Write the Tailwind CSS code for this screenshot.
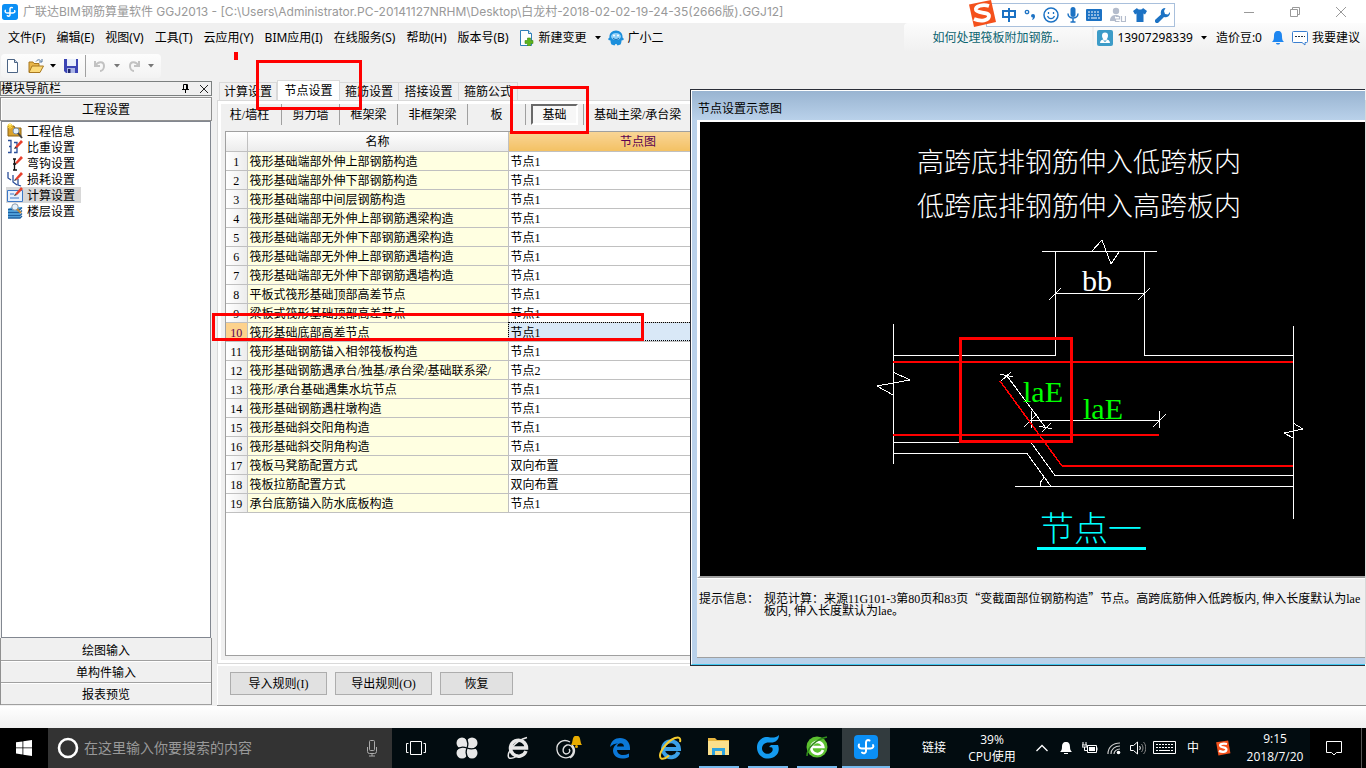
<!DOCTYPE html>
<html lang="zh-CN">
<head>
<meta charset="utf-8">
<title>广联达BIM钢筋算量软件 GGJ2013</title>
<script src="https://cdn.jsdelivr.net/npm/@tailwindcss/browser@4"></script>
</head>
<body class="relative flex h-screen flex-col overflow-hidden bg-[#f0f0f0] font-['Liberation_Serif','Noto_Sans_CJK_SC',sans-serif] text-xs text-black">

<!-- Title bar -->
<header class="flex h-[23px] shrink-0 items-center bg-white pl-[2px] font-['Inter','Noto_Sans_CJK_SC',sans-serif] text-[#999]">
  <svg class="mr-[5px] size-4 shrink-0" viewBox="0 0 24 24"><rect width="24" height="24" rx="4" fill="#0b8ff5"/><path d="M15.500 5.500c-2-1-3.500 0-3.500 2v8.500c0 2-2 3-4 1.500M5 9.500c-1 2 .5 4 2.500 4h9c2.500 0 3.500-2 2.500-3.500" fill="none" stroke="#fff" stroke-width="2.200" stroke-linecap="round"/></svg>
  <h1 class="grow whitespace-nowrap">广联达BIM钢筋算量软件 GGJ2013 - [C:\Users\Administrator.PC-20141127NRHM\Desktop\白龙村-2018-02-02-19-24-35(2666版).GGJ12]</h1>
  <div class="flex items-center pr-[19px]">
    <button aria-label="最小化" class="w-[46px]"><svg class="mr-auto size-3" viewBox="0 0 12 12"><path d="M1 6.500h10" stroke="#999"/></svg></button>
    <button aria-label="还原" class="w-[46px]"><svg class="size-3" viewBox="0 0 12 12"><path d="M1.500 3.500h7v7h-7zM3.500 3V1.500h7v7H9" fill="none" stroke="#999"/></svg></button>
    <button aria-label="关闭"><svg class="size-3" viewBox="0 0 12 12"><path d="M1 1l10 10M11 1L1 11" stroke="#999"/></svg></button>
  </div>
</header>

<!-- Menu bar -->
<nav class="flex h-[29px] shrink-0 items-center justify-between font-['Noto_Sans','Noto_Sans_CJK_SC',sans-serif]">
  <div class="flex items-center gap-[11px] pl-2 whitespace-nowrap">
    <button>文件(F)</button><button>编辑(E)</button><button>视图(V)</button><button>工具(T)</button><button>云应用(Y)</button><button>BIM应用(I)</button><button>在线服务(S)</button><button>帮助(H)</button><button>版本号(B)</button>
    <button class="-ml-px flex items-center gap-1">
      <svg class="size-4" viewBox="0 0 16 16"><path d="M1.500.5h8l3 3v12h-11z" fill="#fff" stroke="#2f7fb8"/><path d="M9.500.5v3h3" fill="#dceefa" stroke="#2f7fb8"/><path d="M8.500 8h3v2.500H14v3h-2.500V16h-3v-2.500H6v-3h2.500z" fill="#5db51c" stroke="#3c8a12" stroke-width=".6"/></svg>
      新建变更
      <svg class="ml-1 h-1 w-[6px]" viewBox="0 0 6 4"><path d="M0 0h6L3 3.500z"/></svg>
    </button>
    <button class="-ml-1 flex items-center gap-1">
      <svg class="size-4" viewBox="0 0 16 16"><path d="M8 .5c4 0 7 3 6.500 7 1 .5 1.500 1.500 1 2.500l-2 .5c0 2-.5 3-1 4l-3 1-1-1.500h-1l-1 1.500-3-1c-.5-1-1-2-1-4L.5 10c-.5-1 0-2 1-2.500C1 3.500 4 .5 8 .5z" fill="#1c8fdc"/><ellipse cx="8" cy="6.500" rx="5" ry="3.500" fill="#8fd0f8"/><circle cx="6" cy="5.500" r="1" fill="#fff"/><circle cx="10" cy="5.500" r="1" fill="#fff"/><path d="M5 8c2 2 4 2 6 0" stroke="#0c62a8" fill="none"/></svg>
      广小二
    </button>
  </div>
  <div class="flex h-full items-center gap-[2px] whitespace-nowrap">
    <a href="#" class="flex h-full w-[188px] items-center rounded-t bg-linear-to-b from-[#fcfcfc] to-[#f0f0f0] pl-7 text-[#0c6470]">如何处理筏板附加钢筋..</a>
    <div class="flex h-full items-center bg-linear-to-b from-[#fcfcfc] to-[#f0f0f0] pr-[6px] pl-[3px]">
      <button class="flex items-center gap-1">
        <svg class="size-4" viewBox="0 0 16 16"><rect width="16" height="16" rx="2" fill="#3d9cc8"/><path d="M8 2.500c2 0 3 1.300 3 3 0 2-1 3.500-1.500 4 1.500 0 3.500 1 3.500 3.500H3C3 10.500 5 9.500 6.500 9.500 6 9 5 7.500 5 5.500c0-1.700 1-3 3-3z" fill="#fff"/><path d="M6 10.500h4l-2 1.500z" fill="#3d9cc8"/></svg>
        13907298339
        <svg class="ml-1 h-1 w-[6px]" viewBox="0 0 6 4"><path d="M0 0h6L3 3.500z"/></svg>
      </button>
      <span class="ml-[9px]">造价豆:0</span>
      <button aria-label="通知" class="ml-[10px]"><svg class="h-4 w-3" viewBox="0 0 12 16"><path d="M6 1c3 0 4 2 4 5 0 4 1 5 2 6H0c1-1 2-2 2-6 0-3 1-5 4-5zM4 13h4c0 2-4 2-4 0z" fill="#1e86f0"/></svg></button>
      <button class="ml-2 flex items-center gap-1">
        <svg class="size-4" viewBox="0 0 16 16"><path d="M1.500 1.500h13a1 1 0 0 1 1 1v9a1 1 0 0 1-1 1H13v2.500L10 12.500H1.500a1 1 0 0 1-1-1v-9a1 1 0 0 1 1-1z" fill="#fff" stroke="#3a7fd0"/><path d="M3 6.500h10" stroke="#234" stroke-dasharray="2 1"/></svg>
        我要建议
      </button>
    </div>
  </div>
</nav>

<!-- Tool bar -->
<div class="flex h-[29px] shrink-0 items-start pt-[2px] pl-px">
  <div class="flex h-6 w-[160px] items-center rounded bg-linear-to-b from-[#fdfdfd] to-[#f3f3f3] pl-[5px]">
    <button aria-label="新建"><svg class="h-4 w-[14px]" viewBox="0 0 14 16"><path d="M1.500 1.500h7l3 3v10h-10z" fill="#fff" stroke="#4c6484"/><path d="M8.500 1.500v3h3" fill="#cfdceb" stroke="#4c6484"/></svg></button>
    <button aria-label="打开" class="ml-2 flex items-center gap-[6px]"><svg class="size-4" viewBox="0 0 16 16"><path d="M1 14V4h4l1 1.500h5V8" fill="#e8b64a" stroke="#a87820"/><path d="M1 14.500L4 8h11.500L12 14.500z" fill="#fbd978" stroke="#a87820"/><path d="M8 3.500c2-2.500 4-2 5 0M14 1v3h-3" fill="none" stroke="#50759f"/></svg><svg class="h-1 w-[6px]" viewBox="0 0 6 4"><path d="M0 0h6L3 3.500z"/></svg></button>
    <button aria-label="保存" class="ml-[7px]"><svg class="size-4" viewBox="0 0 16 16"><path d="M1 1h14v14H3l-2-2z" fill="#3b44b4"/><path d="M4 1h9v7H4z" fill="#e8eefb"/><path d="M4 10h8v5H4z" fill="#aab4e6"/><path d="M5 11h2.500v4H5z" fill="#20286c"/></svg></button>
    <span class="mx-[6px] h-[22px] w-px bg-[#a0a0a0]"></span>
    <button aria-label="撤销" class="flex items-center gap-[6px]"><svg class="size-4" viewBox="0 0 16 16"><path d="M3 3v5h5M3.500 7.500C6 3 12 3 12 8c0 3-2 5-4 5" fill="none" stroke="#c2c2c2" stroke-width="2"/></svg><svg class="h-1 w-[6px]" viewBox="0 0 6 4"><path d="M0 0h6L3 3.500z" fill="#777"/></svg></button>
    <button aria-label="重做" class="ml-[6px] flex items-center gap-[6px]"><svg class="size-4" viewBox="0 0 16 16"><path d="M13 3v5H8M12.500 7.500C10 3 4 3 4 8c0 3 2 5 4 5" fill="none" stroke="#c2c2c2" stroke-width="2"/></svg><svg class="h-1 w-[6px]" viewBox="0 0 6 4"><path d="M0 0h6L3 3.500z" fill="#777"/></svg></button>
  </div>
</div>

<main class="flex min-h-0 grow">
  <!-- Module navigation -->
  <aside class="flex w-[212px] shrink-0 flex-col">
    <div class="flex h-[15px] shrink-0 items-center justify-between border border-[#7c8080] pr-[2px] leading-3">
      <span>模块导航栏</span>
      <span class="flex items-center gap-[9px]">
        <button aria-label="固定"><svg class="h-[9px] w-[9px]" viewBox="0 0 9 9"><path d="M2.500 5V.5h4V5M1 5.500h7M4.500 5.500V9M5.500 1v4" fill="none" stroke="#000"/></svg></button>
        <button aria-label="关闭导航栏"><svg class="size-[10px]" viewBox="0 0 10 10"><path d="M1 1l8 8M9 1L1 9" stroke="#222"/></svg></button>
      </span>
    </div>
    <button class="mt-px h-6 shrink-0 border border-[#909090] pt-[2px] shadow-[inset_1px_1px_#fff]">工程设置</button>
    <ul class="mx-px grow border border-[#828790] bg-white pt-px pl-1 leading-4">
      <li class="flex h-4 w-[75px] items-center gap-1 whitespace-nowrap"><svg class="ml-px size-4 shrink-0" viewBox="0 0 16 16"><path d="M1 3h6l1 2h6v8H1z" fill="#d9a12c" stroke="#8b6212"/><path d="M3 0v6M0 3h6M1 1l4 4M5 1L1 5" stroke="#ffd83a"/><circle cx="9" cy="8" r="3" fill="#e4f1fb" stroke="#7a8fa8"/><path d="M11 10l4 5" stroke="#444" stroke-width="2"/></svg><span class="pt-px">工程信息</span></li>
      <li class="flex h-4 w-[75px] items-center gap-1 whitespace-nowrap"><svg class="ml-px size-4 shrink-0" viewBox="0 0 16 16"><path d="M1 1.500h3v12H1M7 3.500h3v10H7M4 7.500H2M10 8.500H8" fill="none" stroke="#2b4f9a" stroke-width="1.300"/><path d="M8 8l6-7 2 2-6 6z" fill="#e8402c"/><path d="M7 10l1-2 2 1z" fill="#222"/></svg><span class="pt-px">比重设置</span></li>
      <li class="flex h-4 w-[75px] items-center gap-1 whitespace-nowrap"><svg class="ml-px size-4 shrink-0" viewBox="0 0 16 16"><path d="M6 4h3M7.500 4v11M6 9h3M6 15h4" fill="none" stroke="#111" stroke-width="1.300"/><path d="M8 8l6-7 2 2-6 6z" fill="#e8402c"/><path d="M7 10l1-2 2 1z" fill="#222"/></svg><span class="pt-px">弯钩设置</span></li>
      <li class="flex h-4 w-[75px] items-center gap-1 whitespace-nowrap"><svg class="ml-px size-4 shrink-0" viewBox="0 0 16 16"><path d="M1 1v6l3 2M6 4v7l4 3M11 8v6l3 1" fill="none" stroke="#2b4f9a" stroke-width="1.300"/><path d="M8 8l6-7 2 2-6 6z" fill="#e8402c"/><path d="M7 10l1-2 2 1z" fill="#222"/></svg><span class="pt-px">损耗设置</span></li>
      <li class="flex h-4 w-[75px] items-center gap-1 bg-[#d8d8d8] whitespace-nowrap"><svg class="ml-px size-4 shrink-0" viewBox="0 0 16 16"><path d="M.5 3.500h15v11H.5z" fill="#e6f0fc" stroke="#3c78c8"/><path d="M3 7h4M3 11h9" stroke="#3c78c8"/><path d="M8 7l6-7 2 2-6 6z" fill="#e8402c"/><path d="M7 9l1-2 2 1z" fill="#222"/></svg><span class="pt-px">计算设置</span></li>
      <li class="flex h-4 w-[75px] items-center gap-1 whitespace-nowrap"><svg class="ml-px size-4 shrink-0" viewBox="0 0 16 16"><path d="M1 6l4-2h10l-2 2v9H1z" fill="#5cb0e8"/><path d="M1 6.500h12l2-2M1 9.500h12l2-2M1 12.500h12l2-2M1 15h12l2-2" fill="none" stroke="#1d5fa0" stroke-width="1.300"/><circle cx="8" cy="4" r="3.200" fill="#e4f1fb" stroke="#8a98a8"/><path d="M10 6l4 4" stroke="#c08a3c" stroke-width="2"/></svg><span class="pt-px">楼层设置</span></li>
    </ul>
    <div class="flex shrink-0 flex-col border-x border-[#909090] pt-px">
      <button class="h-[22px] border-b border-[#a0a0a0] pt-[2px]">绘图输入</button>
      <button class="h-[22px] border-b border-[#a0a0a0] pt-[2px] shadow-[inset_0_1px_#fff]">单构件输入</button>
      <button class="h-[22px] border-b border-[#a0a0a0] pt-[2px] shadow-[inset_0_1px_#fff]">报表预览</button>
    </div>
    <div class="h-px"></div>
  </aside>

  <!-- Settings -->
  <section class="ml-[5px] flex min-w-0 grow flex-col border-b border-[#909090]">
    <div class="flex h-[19px] shrink-0 items-end pl-[2px] whitespace-nowrap" role="tablist">
      <button role="tab" class="h-[18px] w-[58px] border border-b-0 border-[#d9d9d9]">计算设置</button>
      <button role="tab" aria-selected="true" class="-mb-px h-[21px] w-[63px] border border-b-0 border-[#d9d9d9] bg-white">节点设置</button>
      <button role="tab" class="h-[18px] w-[59px] border border-b-0 border-l-0 border-[#d9d9d9]">箍筋设置</button>
      <button role="tab" class="h-[18px] w-[60px] border border-b-0 border-l-0 border-[#d9d9d9]">搭接设置</button>
      <button role="tab" class="h-[18px] w-[59px] border border-b-0 border-l-0 border-[#d9d9d9]">箍筋公式</button>
    </div>
    <div class="flex min-h-0 grow flex-col border border-[#d9d9d9] bg-white p-[3px]">
      <div class="flex min-h-0 grow flex-col bg-[#f0f0f0] pb-1 pl-1">
        <div class="flex h-[27px] shrink-0 items-start whitespace-nowrap">
          <button class="mr-[10px] ml-[3px] h-[21px] w-[43px] text-center">柱/墙柱</button>
          <span class="h-[21px] w-px bg-[#a0a0a0]"></span>
          <button class="h-[21px] w-[57px]">剪力墙</button>
          <span class="h-[21px] w-px bg-[#a0a0a0]"></span>
          <button class="h-[21px] w-[57px]">框架梁</button>
          <span class="h-[21px] w-px bg-[#a0a0a0]"></span>
          <button class="h-[21px] w-[69px]">非框架梁</button>
          <span class="h-[21px] w-px bg-[#a0a0a0]"></span>
          <button class="h-[21px] w-[57px]">板</button>
          <span class="h-[21px] w-px bg-[#a0a0a0]"></span>
          <button aria-pressed="true" class="mx-[5px] h-[21px] w-[47px] border-2 border-t-[#696969] border-r-white border-b-white border-l-[#696969] bg-[#f7f7f7]">基础</button>
          <span class="h-[21px] w-px bg-[#a0a0a0]"></span>
          <button class="ml-[10px] h-[21px]">基础主梁/承台梁</button>
        </div>
        <div class="min-h-0 grow border border-[#a0a0a0] bg-white">
          <table class="w-[542px] table-fixed border-collapse leading-3">
            <colgroup><col class="w-[21px]"><col class="w-[261px]"><col class="w-[260px]"></colgroup>
            <thead>
              <tr class="h-[19px] bg-linear-to-b from-white to-[#ececec]">
                <th class="border-r border-b border-[#c0c0c0]"></th>
                <th class="border-r border-b border-[#c0c0c0] p-0 pt-[2px] font-normal">名称</th>
                <th class="border-r border-b border-[#c0c0c0] bg-linear-to-b from-[#f9d595] to-[#f3c163] p-0 pt-[2px] font-normal text-[#5a0050]">节点图</th>
              </tr>
            </thead>
            <tbody id="rows"></tbody>
          </table>
        </div>
      </div>
    </div>
    <div class="flex h-[41px] shrink-0 items-start gap-2 border-t-2 border-l border-white pt-[6px] pl-3">
      <button class="h-[23px] w-[97px] border border-[#adadad] bg-[#e1e1e1]">导入规则(I)</button>
      <button class="h-[23px] w-[97px] border border-[#adadad] bg-[#e1e1e1]">导出规则(O)</button>
      <button class="h-[23px] w-[73px] border border-[#adadad] bg-[#e1e1e1]">恢复</button>
    </div>
  </section>
</main>

<div class="h-[22px] shrink-0 bg-linear-to-b from-white to-[#f0f0f0]"></div>

<!-- Taskbar -->
<footer class="flex h-10 shrink-0 bg-[#020c10] font-['Open_Sans','Noto_Sans_CJK_SC',sans-serif] text-white">
  <button aria-label="开始" class="flex w-12 items-center justify-center bg-black"><svg class="size-4" viewBox="0 0 16 16"><path d="M0 2.300L6.500 1.400V7.500H0zM7.300 1.300L16 0v7.500H7.300zM0 8.300h6.500v6.200L0 13.600zM7.300 8.300H16V16l-8.700-1.300z" fill="#fff"/></svg></button>
  <label class="flex w-[344px] items-center bg-[#333] pl-[9px]">
    <svg class="mr-[5px] size-[22px]" viewBox="0 0 22 22"><circle cx="11" cy="11" r="9" fill="none" stroke="#fff" stroke-width="2.600"/></svg>
    <input aria-label="搜索" placeholder="在这里输入你要搜索的内容" class="min-w-0 grow bg-transparent text-sm placeholder:text-[#999]">
    <svg class="mr-[13px] h-[18px] w-[14px]" viewBox="0 0 14 18"><rect x="4.500" y="1.500" width="5" height="10" rx="1" fill="none" stroke="#aaa"/><path d="M2.500 8v4.500a2 2 0 0 0 2 2h5a2 2 0 0 0 2-2V8M7 14.500V17M4 17h6" fill="none" stroke="#aaa"/></svg>
  </label>
  <div class="flex gap-[3px]">
    <button aria-label="任务视图" class="flex w-12 items-center justify-center"><svg class="h-4 w-5" viewBox="0 0 20 16"><path d="M4.500 1.500h11v13h-11zM2.500 3.500H.5v9h2M17.500 3.500h2v9h-2" fill="none" stroke="#fff"/></svg></button>
    <button aria-label="风车" class="flex w-12 items-center justify-center"><svg class="size-[22px]" viewBox="0 0 22 22"><g fill="#e8e8e8"><circle cx="6" cy="6" r="5.500"/><circle cx="16" cy="6" r="5.500"/><circle cx="6" cy="16" r="5.500"/><circle cx="16" cy="16" r="5.500"/><rect x="4" y="4" width="14" height="14"/></g><g fill="none" stroke="#020c10" stroke-width="1.300"><path d="M11 11C12.500 7 12 3 9 0"/><path d="M11 11C15 12.500 19 12 22 9"/><path d="M11 11C9.500 15 10 19 13 22"/><path d="M11 11C7 9.500 3 10 0 13"/></g></svg></button>
    <button aria-label="浏览器" class="flex w-12 items-center justify-center"><svg class="size-6" viewBox="0 0 24 24"><path d="M20 15a8 8 0 1 1 .5-3H6" fill="none" stroke="#e8e8e8" stroke-width="3.500"/><path d="M3 22C0 18 8 5 21 1.500M3 22c3 1 7-1 9-3" fill="none" stroke="#e8e8e8" stroke-width="1.500"/></svg></button>
    <button aria-label="广联云" class="flex w-12 items-center justify-center"><svg class="h-6 w-7" viewBox="0 0 28 24"><path d="M15 6C8 2 1 7 2 14s9 10 14 6c5-5 1-12-4-11-5 2-5 8-1 9 3 0 5-3 3-5M17 9c4 4 3 10-2 13" fill="none" stroke="#e0e0e0" stroke-width="1.400"/><path d="M16 9c2-2 1-8 4-9h3c3 1 2 7 4 9z" fill="#e8ac00"/><circle cx="21.500" cy="10.500" r="1.500" fill="#e8ac00"/></svg></button>
    <button aria-label="Edge" class="flex w-12 items-center justify-center"><svg class="size-[22px]" viewBox="0 0 22 22"><path d="M1 10C2 4 6 1 11 1c6 0 10 4 10 10v2H8c0 3 3 5 6 5 2 0 4-.5 6-1.500V20c-2 1-4 1.500-7 1.500-6 0-9-4-9-8 0-3 2-6 5-7-3 0-6 1-8 3.500zM8 9.500h7C15 5 8.500 5 8 9.500z" fill="#0b78d8"/></svg></button>
  </div>
  <div class="ml-[2px] flex gap-px">
    <button aria-label="Internet Explorer" class="flex w-12 items-center justify-center"><svg class="size-6" viewBox="0 0 24 24"><path d="M20.500 16a8 8 0 1 1 .5-3H7" fill="none" stroke="#3ba0e8" stroke-width="4"/><path d="M3 22.500C-1 18 9 5 17 2c4-1.500 6 0 5 4M3 22.500c3 1 6-1 8-3" fill="none" stroke="#f5cb2e" stroke-width="2"/></svg></button>
    <button aria-label="文件资源管理器" class="flex w-12 items-center justify-center"><span class="flex h-full w-10 items-center justify-center border-b-2 border-[#76b9ed]"><svg class="h-5 w-[22px]" viewBox="0 0 22 20"><path d="M0 1h7l2 2h12v15H0z" fill="#e8b640"/><path d="M0 4h21v14H0z" fill="#fbe08c"/><path d="M4 18v-7h13v7h-3v-4H7v4z" fill="#2ea3de"/></svg></span></button>
    <button aria-label="广联达" class="flex w-12 items-center justify-center"><span class="flex h-full w-10 items-center justify-center border-b-2 border-[#76b9ed]"><svg class="size-6" viewBox="0 0 24 24"><path d="M23 0c0 5-4 8-9 7.500-5-.5-8 2-8 6 0 4 4 6 7.500 5 3-1 4-4 2.500-6l-3-.500 2-2h7c3 8-3 13.500-9.500 13.500C6 24 1 19 1 12.500 1 6 6 1.500 12 2c4 1 8 1 11-2z" fill="#149bf0"/></svg></span></button>
    <button aria-label="360浏览器" class="flex w-12 items-center justify-center"><span class="flex h-full w-10 items-center justify-center border-b-2 border-[#76b9ed]"><svg class="size-6" viewBox="0 0 24 24"><circle cx="12" cy="12" r="10.500" fill="#5cc030"/><path d="M18 15a6 6 0 1 1 .3-3H7" fill="none" stroke="#fff" stroke-width="2.600"/><path d="M2 21C2 12 12 4 22 2" fill="none" stroke="#2f8a1c" stroke-width="1.500"/></svg></span></button>
    <button aria-label="GGJ2013" class="flex w-12 items-center justify-center border-b-2 border-[#76b9ed] bg-[#323b3e]"><svg class="size-6" viewBox="0 0 24 24"><rect width="24" height="24" rx="4" fill="#0b8ff5"/><path d="M15.500 5.500c-2-1-3.500 0-3.500 2v8.500c0 2-2 3-4 1.500M5 9.500c-1 2 .5 4 2.500 4h9c2.500 0 3.500-2 2.500-3.500" fill="none" stroke="#fff" stroke-width="2" stroke-linecap="round"/></svg></button>
  </div>
  <div class="ml-auto flex items-center whitespace-nowrap">
    <span class="w-10 text-center">链接</span>
    <span class="w-[76px] text-center leading-[17px]">39%<br>CPU使用</span>
    <button aria-label="显示隐藏的图标" class="flex w-6 justify-center"><svg class="h-2 w-3" viewBox="0 0 12 8"><path d="M.5 7L6 1.500 11.500 7" fill="none" stroke="#fff" stroke-width="1.300"/></svg></button>
    <button aria-label="提醒" class="flex w-6 justify-center"><svg class="size-[14px]" viewBox="0 0 14 14"><path d="M7 1c3 0 4 2 4 5 0 3 1 4 2 5H1c1-1 2-2 2-5 0-3 1-5 4-5zM5 12h4v1H5z" fill="#fff"/></svg></button>
    <button aria-label="电源" class="flex w-6 justify-center"><svg class="h-3 w-4" viewBox="0 0 16 12"><path d="M5.500 3.500h9v7h-9zM15 5.500v3" fill="none" stroke="#fff"/><path d="M7 5h6v4H7z" fill="#fff"/><path d="M1 0v3M4 0v3M0 3h5v2H0zM2.500 5v3.500H5" fill="none" stroke="#fff"/></svg></button>
    <button aria-label="网络" class="flex w-6 justify-center"><svg class="size-[14px]" viewBox="0 0 14 14"><path d="M1 13C1 6 6 2 13 2M4 13c0-5 4-8 9-8M7 13c0-3 3-5 6-5" fill="none" stroke="#ccc" stroke-width="1.200"/><circle cx="11.500" cy="11.500" r="1.800" fill="#fff"/></svg></button>
    <button aria-label="音量" class="flex w-6 justify-center"><svg class="h-[14px] w-4" viewBox="0 0 16 14"><path d="M.5 4.500h3l4-3.500v12l-4-3.500h-3z" fill="none" stroke="#fff"/><path d="M9.500 5c1 1 1 3 0 4" fill="none" stroke="#fff"/><path d="M11.500 3c2 2 2 6 0 8M13.500 1c3 3 3 9 0 12" fill="none" stroke="#888"/></svg></button>
    <button aria-label="触摸键盘" class="flex w-[30px] justify-center"><svg class="h-[14px] w-6" viewBox="0 0 24 14"><path d="M.5.5h22v12H.5z" fill="none" stroke="#fff"/><path d="M3 3.500h17M3 6.500h17" stroke="#fff" stroke-dasharray="2 1"/><path d="M3 9.500h2M6 9.500h11M18 9.500h2" stroke="#fff"/></svg></button>
    <button class="w-[26px]">中</button>
    <button aria-label="搜狗输入法" class="flex w-[34px] justify-center"><svg class="size-4" viewBox="0 0 28 28"><path d="M2 4l21-3 4 22-21 4z" fill="#f4511c"/><path d="M21 7c-5-1-13-1-12 3s12 2 11 7-9 4-13 2" fill="none" stroke="#fff" stroke-width="4"/></svg></button>
    <span class="w-[70px] text-center leading-[18px]">9:15<br>2018/7/20</span>
    <button aria-label="操作中心" class="flex h-full w-[51px] items-center justify-center bg-black pr-1"><svg class="size-4" viewBox="0 0 16 16"><path d="M.5 1.500h15v11h-5L8 15l-2.500-2.500h-5z" fill="none" stroke="#fff"/></svg></button>
    <span class="h-full w-[5px] border-l border-[#555] bg-black"></span>
  </div>
</footer>

<!-- Node preview window -->
<div role="dialog" aria-label="节点设置示意图" class="absolute top-[89px] right-px left-[690px] flex flex-col overflow-hidden border-t border-b border-l border-[#2a2e38]">
  <div class="flex flex-col border-t border-b border-l border-t-white border-b-[#40c8f0] border-l-white bg-[#b9d1ea]">
    <h2 class="flex h-[29px] items-center bg-linear-to-b from-[#99b4d1] to-[#b9d1ea] pt-[6px] pl-[6px] font-['Open_Sans','Noto_Sans_CJK_SC',sans-serif]">节点设置示意图</h2>
    <div class="ml-[5px] flex flex-col border-b border-[#a0a0a0] bg-[#f0f0f0]">
      <div class="overflow-hidden border-t-2 border-b-2 border-l-[3px] border-t-white border-b-[#a0a0a0] border-l-white bg-black">
        <svg class="h-[454px] w-[666px] font-['Liberation_Serif','Noto_Sans_CJK_SC',serif] font-light" viewBox="700 122 666 454">
          <g fill="#fff" font-size="27"><text x="917" y="172">高跨底排钢筋伸入低跨板内</text><text x="917" y="216">低跨底排钢筋伸入高跨板内</text></g>
          <g fill="none" stroke="#fff" shape-rendering="crispEdges">
            <path d="M893.500 324v140M893 372l17 8-33 6 16 9M1042 251.500h115M1092 251l10-11 9 24 8-12M1055.500 251v104.500H893M1144.500 251v104.500H1293M1055 293.500h89M1049 300l12-12M1138 300l12-12"/>
            <path d="M893 442.500h138l24 33h238M893 453.500h134l24 33M1015 486.500h278M1040.500 486v-4l4-5M1293.500 326v193M1293 423l10 6-19 4 9 5"/>
            <path d="M1007 376l39 52M1000 374l13 3M1001 381l10-9M1039 426l13 3M1042 432l9-9M1033 418l4-4M1031 420.500h128M1031.500 411v17M1159.500 411v17M1024 427l13-13M1153 427l13-13"/>
          </g>
          <g fill="none" stroke="#f00" shape-rendering="crispEdges"><path d="M893 362h400M893 435h266M1062 466h231" stroke-width="2"/><path d="M1000 381l62 85" stroke-width="1.500"/></g>
          <g font-size="30"><text x="1082" y="291" fill="#fff">bb</text><text x="1023" y="402" fill="#0f0">laE</text><text x="1083" y="419" fill="#0f0">laE</text></g>
          <text x="1040" y="541" fill="#0ff" font-size="34">节点一</text>
          <path d="M1037 548.500h109" stroke="#0ff" stroke-width="3"/>
          <rect x="960.500" y="338.500" width="111" height="103" fill="none" stroke="#f00" stroke-width="3"/>
        </svg>
      </div>
      <div class="flex h-[79px] gap-[5px] border-t border-white pt-[13px] pl-[2px] leading-3 whitespace-nowrap">
        <span class="font-['Noto_Sans_CJK_SC',sans-serif]">提示信息：</span>
        <p>规范计算：来源11G101-3第80页和83页<span class="font-['Noto_Sans_CJK_SC',sans-serif]">“变截面部位钢筋构造”</span>节点。高跨底筋伸入低跨板内, 伸入长度默认为lae<br>板内, 伸入长度默认为lae。</p>
      </div>
    </div>
    <div class="h-[6px]"></div>
  </div>
</div>

<!-- Input method bar -->
<div class="absolute top-0 right-[191px] flex h-[27px] w-[206px] items-end">
  <div class="ml-[17px] flex h-6 grow items-center justify-between border border-[#a9c0dc] bg-white pr-1 pl-[11px] text-[#1874cd]">
    <button aria-label="中文" class="ml-1"><svg class="h-4 w-[14px]" viewBox="0 0 14 16"><path d="M1 4h12v6H1zM7 1v14" fill="none" stroke="#1c72c4" stroke-width="2"/></svg></button>
    <button aria-label="标点"><svg class="h-4 w-3" viewBox="0 0 12 16"><circle cx="3" cy="5" r="1.700" fill="none" stroke="#1c72c4" stroke-width="1.300"/><path d="M7 9a2 2 0 1 1 4 0c0 2-1 3.500-3 4l1-2.500A2 2 0 0 1 7 9z" fill="#1c72c4"/></svg></button>
    <button aria-label="表情"><svg class="size-4" viewBox="0 0 16 16"><circle cx="8" cy="8" r="7" fill="none" stroke="#1c72c4" stroke-width="1.500"/><path d="M5.500 5v2M10.500 5v2M4.500 9c1.500 3.500 5.500 3.500 7 0" fill="none" stroke="#1c72c4" stroke-width="1.300"/></svg></button>
    <button aria-label="语音"><svg class="h-4 w-3" viewBox="0 0 12 16"><rect x="3.500" y="0" width="5" height="10" rx="2.500" fill="#1c72c4"/><path d="M1 6.500c0 6 10 6 10 0M6 11v4M3.500 15h5" fill="none" stroke="#1c72c4" stroke-width="1.500"/></svg></button>
    <button aria-label="软键盘"><svg class="h-3 w-4" viewBox="0 0 16 12"><rect width="16" height="12" rx="1" fill="#1c72c4"/><path d="M2 3h12M2 6h12" stroke="#fff" stroke-dasharray="2 1"/><path d="M2 9h1.500M5 9h6M12 9h2" stroke="#fff"/></svg></button>
    <button aria-label="账户"><svg class="size-4" viewBox="0 0 16 16"><circle cx="6" cy="4" r="3.200" fill="#b4bccc"/><path d="M0 14c0-5 3-6 6-6s3 1 3 1H5v5z" fill="#b4bccc"/><path d="M5.500 9.500h4v2.500h-4v2.500h4M11.500 9v5.500h4V9" fill="none" stroke="#b4bccc" stroke-width="1.200"/></svg></button>
    <button aria-label="皮肤"><svg class="h-[14px] w-[14px]" viewBox="0 0 14 14"><path d="M4 0c1 2 5 2 6 0l4 3-2 3.500-1.500-1V14h-7V5.500l-1.500 1L0 3z" fill="#1c72c4"/></svg></button>
    <button aria-label="工具箱"><svg class="size-[15px]" viewBox="0 0 15 15"><path d="M10.500 0L9 3l1 3 3 .5L15 4c.5 4-3 6-6 5l-5.500 5.500a2 2 0 0 1-3-3L6 6.500C5 3 7 0 10.500 0z" fill="#1c72c4"/></svg></button>
  </div>
  <svg class="absolute top-0 left-0 size-7" viewBox="0 0 28 28"><path d="M0 4.500L22 0l5 22-22 5z" fill="#f4511c"/><path d="M20 6C14 4 6 6 7 10c1 3.500 13 1.500 13 6s-8 6-15 3" fill="none" stroke="#fff" stroke-width="3.800"/></svg>
</div>

<!-- Red mark-up -->
<div class="absolute top-[52px] left-[234px] h-2 w-1 bg-[#f00]"></div>
<div class="absolute top-[60px] left-[256px] h-[50px] w-[106px] border-3 border-[#f00]"></div>
<div class="absolute top-[86px] left-[510px] h-12 w-[79px] border-3 border-[#f00]"></div>
<div class="absolute top-[313px] left-[212px] h-7 w-[432px] border-3 border-[#f00]"></div>

<script>
  const rows = [
    ['筏形基础端部外伸上部钢筋构造', '节点1'], ['筏形基础端部外伸下部钢筋构造', '节点1'], ['筏形基础端部中间层钢筋构造', '节点1'],
    ['筏形基础端部无外伸上部钢筋遇梁构造', '节点1'], ['筏形基础端部无外伸下部钢筋遇梁构造', '节点1'],
    ['筏形基础端部无外伸上部钢筋遇墙构造', '节点1'], ['筏形基础端部无外伸下部钢筋遇墙构造', '节点1'],
    ['平板式筏形基础顶部高差节点', '节点1'], ['梁板式筏形基础顶部高差节点', '节点1'], ['筏形基础底部高差节点', '节点1'],
    ['筏形基础钢筋锚入相邻筏板构造', '节点1'], ['筏形基础钢筋遇承台/独基/承台梁/基础联系梁/', '节点2'], ['筏形/承台基础遇集水坑节点', '节点1'],
    ['筏形基础钢筋遇柱墩构造', '节点1'], ['筏形基础斜交阳角构造', '节点1'], ['筏形基础斜交阴角构造', '节点1'],
    ['筏板马凳筋配置方式', '双向布置'], ['筏板拉筋配置方式', '双向布置'], ['承台底筋锚入防水底板构造', '节点1']
  ];
  document.getElementById('rows').innerHTML = rows.map(([name, value], i) => {
    const current = i === 9;
    const head = current ? 'bg-[#fdd28c] text-[#5a0050]' : 'bg-linear-to-r from-white to-[#ececec]';
    const cell = current ? 'bg-[#d9e8f7] outline outline-dotted -outline-offset-1 outline-black' : 'bg-white';
    return `<tr class="h-[19px] whitespace-nowrap"><th scope="row" class="border-r border-b border-[#c0c0c0] p-0 pt-[2px] font-normal ${head}">${i + 1}</th><td class="overflow-hidden border-r border-b border-[#c0c0c0] bg-[#ffffe1] p-0 pt-[2px] pl-[2px]">${name}</td><td class="border-r border-b border-[#c0c0c0] p-0 pt-[2px] pl-[2px] ${cell}">${value}</td></tr>`;
  }).join('');
</script>
</body>
</html>
